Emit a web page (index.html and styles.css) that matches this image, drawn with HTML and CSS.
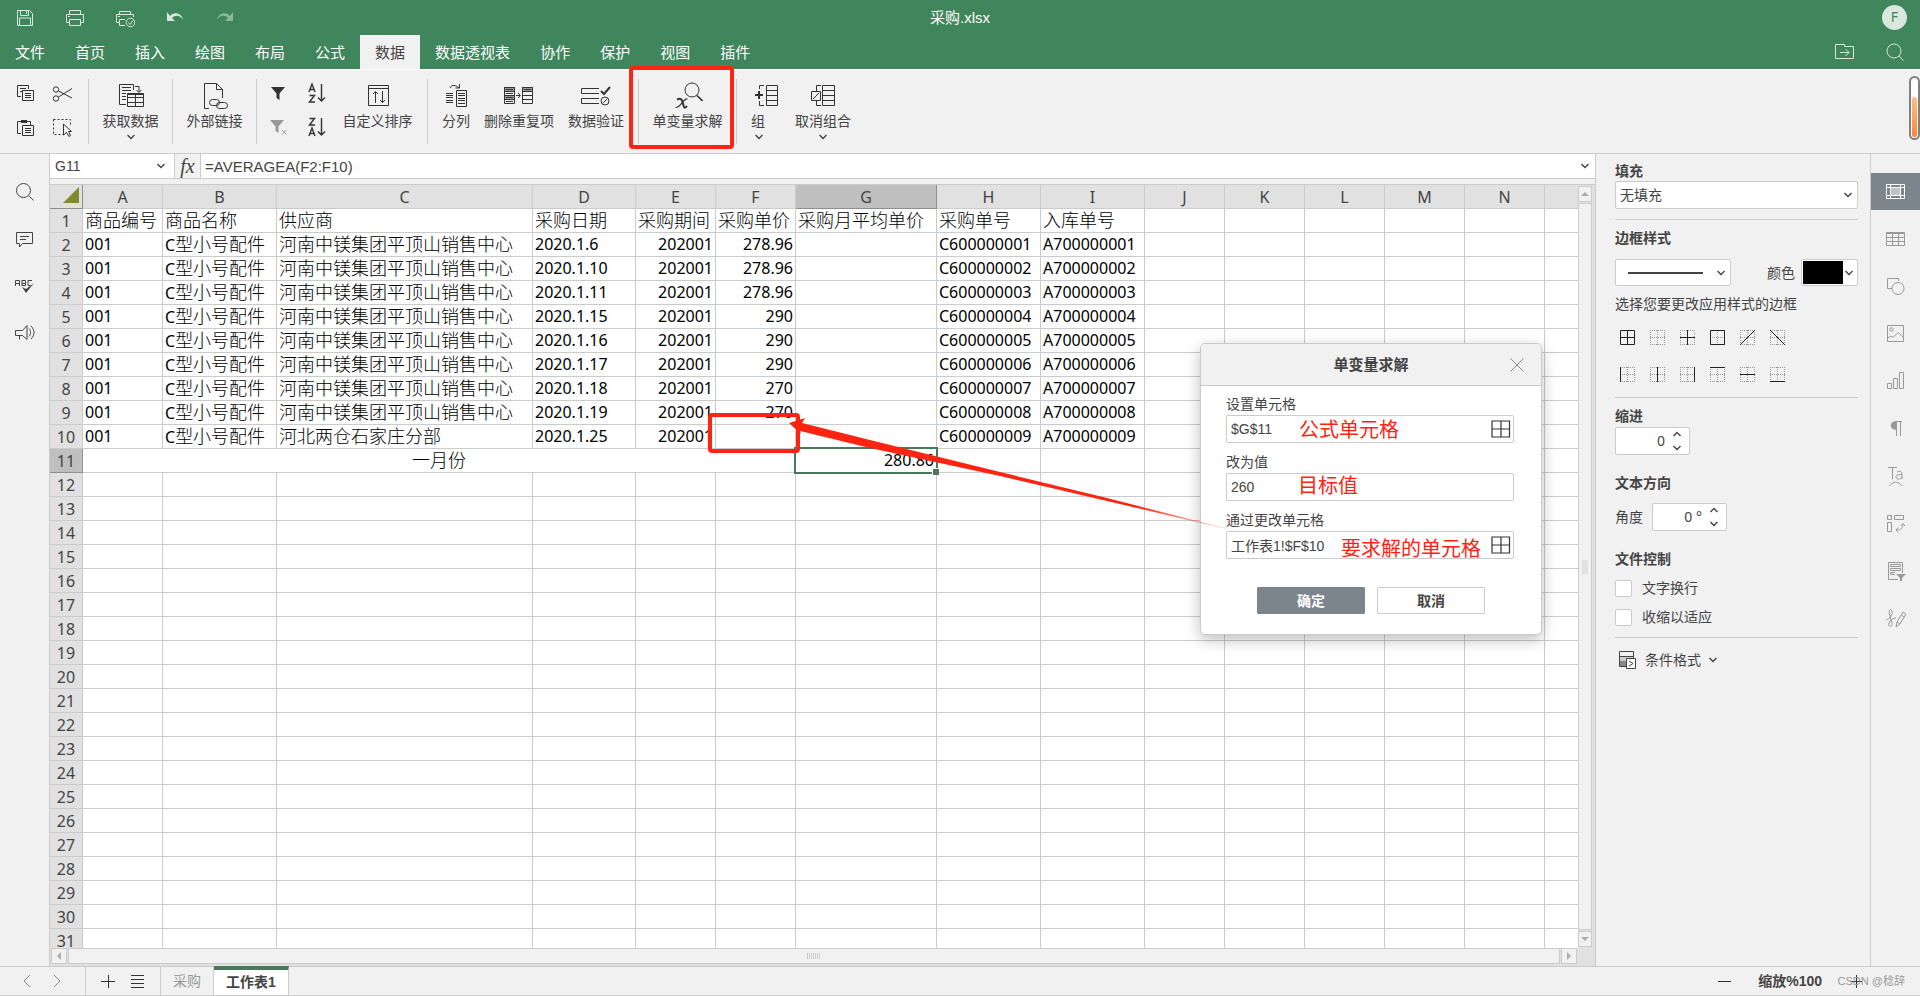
FILE: index.html
```html
<!DOCTYPE html>
<html lang="zh-CN">
<head>
<meta charset="utf-8">
<title>采购.xlsx</title>
<link rel="stylesheet" href="styles.css">
</head>
<body>
<svg class="defs" aria-hidden="true">
  <symbol id="chev" viewBox="0 0 10 8"><path d="M1.5 2 5 5.5 8.500 2" fill="none" stroke="#444" stroke-width="1.4"/></symbol>
  <symbol id="dots" viewBox="0 0 15 15"><path d="M0 .5h15M0 14.500h15M.5 0v15M14.500 0v15M0 7.500h15M7.500 0v15" fill="none" stroke="#999" stroke-dasharray="1 1"/></symbol>
  <symbol id="range" viewBox="0 0 20 18"><path d="M1 1h17.500v16H1zM1 9h17.500M10 1v16" fill="none" stroke="#333" stroke-width="1.2"/></symbol>
</svg>

<header class="top">
  <div class="titlebar">
    <div class="quick">
      <button aria-label="保存"><svg width="20" height="20" viewBox="0 0 20 20"><path d="M2.500 2.500h12l3 3v12h-15zM5.500 2.500v5h8v-5M11.500 3v3M4.500 17v-7h11v7"/></svg></button>
      <button aria-label="打印"><svg width="20" height="20" viewBox="0 0 20 20"><path d="M4.500 6V2.500h11V6M4.500 14.500h-3v-8h17v8h-3M4.500 11.500h11v6h-11zM3 8.500h2"/></svg></button>
      <button aria-label="快速打印"><svg width="20" height="20" viewBox="0 0 20 20"><path d="M4.500 6V3.500h11V6M4.500 14.500h-3v-8h17V9M10 17.500H4.500v-6H10M3 8.500h2"/><circle cx="15.500" cy="14.500" r="4.300"/><path d="m13.500 14.500 1.500 2 3-4"/></svg></button>
      <button aria-label="撤消"><svg width="20" height="20" viewBox="0 0 20 20"><path class="solid" d="M2 4v9h8L7 10c4-4 9-2 11 2-1-7-9-9-13-4z"/></svg></button>
      <button aria-label="重做" disabled><svg width="20" height="20" viewBox="0 0 20 20"><path class="solid" d="M18 4v9h-8l3-3C9 6 4 8 2 12c1-7 9-9 13-4z"/></svg></button>
    </div>
    <div class="doc-title">采购.xlsx</div>
    <div class="user"><span class="avatar">F</span></div>
  </div>
  <div class="tabbar">
    <nav class="tabs">
      <button>文件</button><button>首页</button><button>插入</button><button>绘图</button><button>布局</button><button>公式</button><button class="on">数据</button><button>数据透视表</button><button>协作</button><button>保护</button><button>视图</button><button>插件</button>
    </nav>
    <div class="quick">
      <button aria-label="打开文件位置"><svg width="20" height="18" viewBox="0 0 20 18"><path d="M.5 15.500V1.500h9v2h9v12zM5 9.500h9M10.500 6l3.500 3.500-3.500 3.500"/></svg></button>
      <button aria-label="搜索"><svg width="20" height="20" viewBox="0 0 20 20"><circle cx="9" cy="9" r="7"/><path d="m14 14 4.500 4.500"/></svg></button>
    </div>
  </div>
</header>

<div class="ribbon">
  <div class="group clip">
    <button aria-label="复制"><svg width="24" height="24" viewBox="0 0 24 24"><path d="M8 14.500H4.500v-11h11V7M7 6.500h6M7 9.500h2M9.500 8.500h11v10h-11zM12 11.500h6M12 13.500h6M12 15.500h6"/></svg></button>
    <button aria-label="剪切"><svg width="24" height="24" viewBox="0 0 24 24"><circle cx="5" cy="7.500" r="2.700"/><circle cx="5" cy="16.500" r="2.700"/><path d="m7.500 9 13.500 7M7.500 15 21 6.500"/></svg></button>
    <button aria-label="粘贴"><svg width="24" height="24" viewBox="0 0 24 24"><path d="M8 17.500H4.500v-12h13V9M9.500 9.500h11v10h-11zM12 12.500h6M12 14.500h6M12 16.500h6"/><path class="solid" d="M8 4h6v3H8z"/></svg></button>
    <button aria-label="选择"><svg width="24" height="24" viewBox="0 0 24 24"><path stroke-dasharray="2 2" d="M2.500 3.500h17V10M2.500 3.500v15H13"/><path d="M12.500 8v11l3-2.500 2.500 4 1.500-1-2-4h3z"/></svg></button>
  </div>
  <div class="group one">
    <button class="big"><svg width="30" height="28" viewBox="0 0 30 28"><path d="M10 22.500H3.500v-20h14V8M6 5.500h9M6 8.500h9M6 11.500h4M6 14.500h4M6 17.500h4M11.500 11.500h16v13h-16zM11.500 15.500h16M11.500 20.500h16M19.500 12v12M19 4.500h4V10M20.500 8l2.500 2.500L25.500 8"/><path d="M11 12.500h17"/></svg><span>获取数据</span><svg class="dd" width="10" height="8"><use href="#chev"/></svg></button>
  </div>
  <div class="group one">
    <button class="big"><svg width="30" height="28" viewBox="0 0 30 28"><path d="M9 26.500H4.500v-25h12l6 6V16M16.500 1.500v6h6"/><rect x="9.500" y="17.500" width="10" height="6" rx="3"/><rect x="16.500" y="20.500" width="11" height="6" rx="3"/></svg><span>外部链接</span></button>
  </div>
  <div class="group sort">
    <div class="pairs">
      <button aria-label="筛选"><svg width="24" height="24" viewBox="0 0 24 24"><path class="solid" d="M5 5h14l-5.500 6.500V18L10.500 16v-4.500z"/></svg></button>
      <button aria-label="升序"><svg width="24" height="24" viewBox="0 0 24 24"><path stroke-width="1.400" d="m5 10 3-8 3 8M6 7.500h4M5.500 13.500h5l-5 6.500h5.500M17.500 2v17M14 15.500l3.500 3.500 3.500-3.500"/></svg></button>
      <button aria-label="清除筛选" disabled><svg width="24" height="24" viewBox="0 0 24 24"><path class="solid" d="M4 4h14l-5.500 6.500V17L9.500 15v-4.500z"/><path d="m16 14 4.500 4.500m0-4.500L16 18.500"/></svg></button>
      <button aria-label="降序"><svg width="24" height="24" viewBox="0 0 24 24"><path stroke-width="1.400" d="M5.500 2.500h5l-5 6.500h5.500M5 20l3-8 3 8M6 17.500h4M17.500 2v17M14 15.500l3.500 3.500 3.500-3.500"/></svg></button>
    </div>
    <button class="big"><svg width="30" height="28" viewBox="0 0 30 28"><path d="M5.500 3.500h20v20h-20zM5.500 6.500h20M12.500 9.500V21M10 12l2.500-2.500L15 12M19.500 9v11.500M17 18l2.500 2.500L22 18"/></svg><span>自定义排序</span></button>
  </div>
  <div class="group wide">
    <button class="big"><svg width="30" height="28" viewBox="0 0 30 28"><path d="M5 11.500h7M5 13.500h7M5 15.500h7M5 18.500h7M5 20.500h7M15.500 8.500h10v16h-10zM17 11.500h7M17 13.500h7M17 16.500h7M17 18.500h7M17 21.500h7M9 6c2-4 6-3 9 0M18.500 2v4h-4"/></svg><span>分列</span></button>
    <button class="big"><svg width="30" height="28" viewBox="0 0 30 28"><path fill="#999" d="M.5 5.500h10v4H.5zM.5 13.500h10v4H.5zM18.500 5.500h10v4h-10z"/><path d="M.5 5.500h10v16H.5zM2 7.500h7M2 11.500h7M2 15.500h7M2 19.500h7M18.500 5.500h10v16h-10zM20 7.500h7M18.500 13.500h10M18.500 17.500h10M12 13.500h4M14 11l2.500 2.500L14 16"/></svg><span>删除重复项</span></button>
    <button class="big"><svg width="30" height="28" viewBox="0 0 30 28"><path d="M18 6.500H.5v5H18M18 16.500H.5v5H18"/><circle cx="24" cy="19" r="4"/><path d="m21.500 21.500 5-5"/><path stroke-width="2" d="m20 9 3 3 6-7"/></svg><span>数据验证</span></button>
  </div>
  <div class="group solve">
    <button class="big"><svg width="30" height="28" viewBox="0 0 30 28"><circle cx="19" cy="8" r="7"/><path stroke-width="1.600" d="m24 13.500 5.500 5.500"/><path stroke-width="2" d="M4 17.500c4-2 5 0 6 4 1 5 2 5 4 2.500"/><path stroke-width="1.200" d="M14.500 17c-4-1-7 9-12 8.500"/></svg><span>单变量求解</span></button>
  </div>
  <div class="group last">
    <button class="big left"><svg width="30" height="28" viewBox="0 0 30 28"><path d="M15.500 3.500h11v20h-11zM15.500 8.500h11M15.500 13.500h11M15.500 18.500h11M13 3.500H8.500V7M8.500 19v4.500H13"/><path stroke-width="2" d="M4 13h8M8 9v8"/></svg><span>组</span><svg class="dd" width="10" height="8"><use href="#chev"/></svg></button>
    <button class="big"><svg width="30" height="28" viewBox="0 0 30 28"><path d="M14.500 3.500h12v20h-12zM14.500 8.500h12M14.500 13.500h12M14.500 18.500h12M13 3.500H8.500V9M8.500 18v5.500H13M3.500 9.500h9v9h-9zM5 17l6-6"/></svg><span>取消组合</span><svg class="dd" width="10" height="8"><use href="#chev"/></svg></button>
  </div>
</div>

<main class="work">
  <nav class="rail left-rail">
    <button aria-label="查找"><svg width="20" height="20" viewBox="0 0 20 20"><circle cx="8.500" cy="8.500" r="7"/><path d="m13.500 13.500 5 5"/></svg></button>
    <button aria-label="批注"><svg width="20" height="20" viewBox="0 0 20 20"><path d="M1.500 3.500h16v11h-10L4.500 18v-3.500h-3zM5 7.500h9M5 10.500h6"/></svg></button>
    <button aria-label="拼写检查"><svg width="20" height="20" viewBox="0 0 20 20"><path d="M.5 10V4.500h4V10M.5 7.500h4M7 4v6M7 4.500h3.500v5H7M7 7.500h3.500M17 4.500h-4v5h2.500"/><path class="solid" d="m7 11 4 2 8-6-8 10z"/></svg></button>
    <button aria-label="反馈和支持"><svg width="20" height="20" viewBox="0 0 20 20"><path d="M.5 7.500h7l4.500-5v14l-4.500-4h-7zM4.500 12.500v4M14 5.500c2 2 2 6 0 8M16 3c4 4 4 9 0 13"/></svg></button>
  </nav>

  <section class="center">
    <div class="formula">
      <div class="namebox"><input type="text" aria-label="名称框" value="G11"><svg width="10" height="8"><use href="#chev"/></svg></div>
      <button class="fx" aria-label="插入函数">fx</button>
      <input class="expr" type="text" aria-label="编辑栏" value="=AVERAGEA(F2:F10)">
      <svg class="expand" width="10" height="8"><use href="#chev"/></svg>
    </div>
    <div class="sheet">
      <div class="viewport">
        <table class="cells"><colgroup id="cols"></colgroup><thead><tr id="heads"></tr></thead><tbody id="rows"></tbody></table>
      </div>
      <div class="vbar"><button aria-label="向上滚动"><i class="up"></i></button><div class="track"><i></i></div><button aria-label="向下滚动"><i class="down"></i></button></div>
      <div class="hbar"><button aria-label="向左滚动"><i class="lt"></i></button><div class="track"><i></i></div><button aria-label="向右滚动"><i class="rt"></i></button></div>
    </div>
  </section>

  <aside class="panel">
    <h2><label for="fill">填充</label></h2>
    <div class="select"><select id="fill"><option>无填充</option></select><svg width="10" height="8"><use href="#chev"/></svg></div>
    <hr>
    <h2>边框样式</h2>
    <div class="border-row">
      <button class="line-style" aria-label="线条样式"><i></i><svg width="10" height="8"><use href="#chev"/></svg></button>
      <span>颜色</span>
      <button class="color" aria-label="颜色"><i></i><svg width="10" height="8"><use href="#chev"/></svg></button>
    </div>
    <p>选择您要更改应用样式的边框</p>
    <div class="borders">
      <button aria-label="所有框线"><svg width="15" height="15"><path d="M.5.5h14v14H.5zM.5 7.500h14M7.500.5v14"/></svg></button>
      <button aria-label="无框线"><svg width="15" height="15"><use href="#dots"/></svg></button>
      <button aria-label="内部框线"><svg width="15" height="15"><use href="#dots"/><path d="M0 7.500h15M7.500 0v15"/></svg></button>
      <button aria-label="外部框线"><svg width="15" height="15"><use href="#dots"/><path d="M.5.5h14v14H.5z"/></svg></button>
      <button aria-label="斜上框线"><svg width="15" height="15"><use href="#dots"/><path d="M0 15 15 0"/></svg></button>
      <button aria-label="斜下框线"><svg width="15" height="15"><use href="#dots"/><path d="m0 0 15 15"/></svg></button>
      <button aria-label="左框线"><svg width="15" height="15"><use href="#dots"/><path d="M.5 0v15"/></svg></button>
      <button aria-label="内部竖线"><svg width="15" height="15"><use href="#dots"/><path d="M7.500 0v15"/></svg></button>
      <button aria-label="右框线"><svg width="15" height="15"><use href="#dots"/><path d="M14.500 0v15"/></svg></button>
      <button aria-label="上框线"><svg width="15" height="15"><use href="#dots"/><path d="M0 .5h15"/></svg></button>
      <button aria-label="内部横线"><svg width="15" height="15"><use href="#dots"/><path d="M0 7.500h15"/></svg></button>
      <button aria-label="下框线"><svg width="15" height="15"><use href="#dots"/><path d="M0 14.500h15"/></svg></button>
    </div>
    <hr>
    <h2><label for="indent">缩进</label></h2>
    <div class="spin"><input id="indent" type="text" value="0"><span><button aria-label="增加缩进"><svg width="10" height="8" class="flip"><use href="#chev"/></svg></button><button aria-label="减少缩进"><svg width="10" height="8"><use href="#chev"/></svg></button></span></div>
    <h2 class="spaced">文本方向</h2>
    <div class="angle"><label for="angle">角度</label><div class="spin"><input id="angle" type="text" value="0 °"><span><button aria-label="增加角度"><svg width="10" height="8" class="flip"><use href="#chev"/></svg></button><button aria-label="减少角度"><svg width="10" height="8"><use href="#chev"/></svg></button></span></div></div>
    <h2 class="spaced">文件控制</h2>
    <label class="check"><input type="checkbox">文字换行</label>
    <label class="check"><input type="checkbox">收缩以适应</label>
    <hr>
    <button class="cond"><svg width="20" height="20" viewBox="0 0 20 20"><path fill="#ccc" stroke="none" d="M2 6h14v5H2z"/><path fill="#888" stroke="none" d="M2 11h7v5H2z"/><path d="M9 16.500H1.500v-15h14V8M1.500 6.500h14"/><path fill="#fff" d="M8.500 8.500h9v10h-9z"/><path d="m11 11 4 2.500-4 2.500"/></svg>条件格式<svg width="10" height="8"><use href="#chev"/></svg></button>
  </aside>

  <nav class="rail right-rail">
    <button class="on" aria-label="单元格设置"><svg width="20" height="20" viewBox="0 0 20 20"><path d="M.5 2.500h18v14H.5zM.5 5.500h18M.5 13.500h18M4.500 2.500v14M14.500 2.500v14"/><path class="solid" opacity=".5" d="M5 6h9v7H5z"/></svg></button>
    <button aria-label="表格设置"><svg width="20" height="20" viewBox="0 0 20 20"><path d="M.5 3.500h18v13H.5zM.5 4.500h18M.5 8.500h18M.5 12.500h18M6.500 4v12M12.500 4v12"/></svg></button>
    <button aria-label="形状设置"><svg width="20" height="20" viewBox="0 0 20 20"><path d="M6 12.500H1.500v-10h11V5"/><circle cx="12" cy="12.500" r="6"/></svg></button>
    <button aria-label="图像设置"><svg width="20" height="20" viewBox="0 0 20 20"><path d="M1.500 1.500h16v16h-16zM2 14l3-2 2 1.500 5-5 5.500 5"/><circle cx="5.500" cy="5.500" r="1.700"/></svg></button>
    <button aria-label="图表设置"><svg width="20" height="20" viewBox="0 0 20 20"><path d="M1.500 12.500h4v5h-4zM7.500 7.500h4v10h-4zM13.500 1.500h4v16h-4z"/></svg></button>
    <button aria-label="段落设置"><svg width="20" height="20" viewBox="0 0 20 20"><path class="solid" d="M10 2v9c-7 0-7-9 0-9z"/><path d="M9 2.500h7M10.500 3v14M14.500 3v14"/></svg></button>
    <button aria-label="艺术字设置"><svg width="20" height="20" viewBox="0 0 20 20"><path d="M2 1.500h9M6.500 2v11M11 6c4-2 5 0 5 2v5M16 8.500c-3 0-6 0-6 2.500s5 3 6 0M3 20c4-5 9-5 13 0"/></svg></button>
    <button aria-label="数据透视表设置"><svg width="20" height="20" viewBox="0 0 20 20"><path d="M1.500 1.500h4v4h-4zM8.500 1.500h9v4h-9zM1.500 8.500h4v9h-4zM11 16c4 0 6-2 6-6M14.500 12 17 9.500l2 2.500M12.500 13.500 10 16l2.500 2.500"/></svg></button>
    <button aria-label="切片器设置"><svg width="20" height="20" viewBox="0 0 20 20"><path d="M12 18.500H2.500v-17h14V12M4.500 3.500h10v2h-10zM4.500 7.500h10v2h-10zM9 13.500H4.500v-2H9"/><path class="solid" d="M10 13h10l-4 4v5l-2-1v-4z"/></svg></button>
    <button aria-label="签名设置"><svg width="20" height="20" viewBox="0 0 20 20"><path d="M0 12c4-1 7-6 6-9-2-4-4 1-2 5l2 7c1 5-5 4-3 0 1-3 4-5 7-5M10 19l1-5 6-10 3 2-6 10zM15.500 7l2.500 2M11 14l3 2"/></svg></button>
  </nav>
</main>

<footer class="status">
  <div class="nav"><button aria-label="上一张"><svg width="20" height="20" viewBox="0 0 20 20"><path d="m13 4-6 6 6 6"/></svg></button><button aria-label="下一张"><svg width="20" height="20" viewBox="0 0 20 20"><path d="m7 4 6 6-6 6"/></svg></button></div>
  <div class="add"><button aria-label="添加工作表"><svg width="20" height="20" viewBox="0 0 20 20"><path d="M3 10.500h14M10.500 4v13"/></svg></button><button aria-label="工作表列表"><svg width="20" height="20" viewBox="0 0 20 20"><path d="M3 4.500h13M3 8.500h13M3 12.500h13M3 16.500h13"/></svg></button></div>
  <button class="tab">采购</button>
  <button class="tab on">工作表1</button>
  <div class="zoom"><button aria-label="缩小"><svg width="20" height="20" viewBox="0 0 20 20"><path d="M4 10.500h13"/></svg></button><span class="pct">缩放%100</span><button aria-label="放大"><svg width="20" height="20" viewBox="0 0 20 20"><path d="M4 10.500h12M10.500 4v13"/></svg></button></div>
</footer>

<form class="dialog" role="dialog" aria-labelledby="dlg-title">
  <div class="dlg-head"><strong id="dlg-title">单变量求解</strong><button type="button" aria-label="关闭"><svg width="14" height="14" viewBox="0 0 14 14"><path d="m.5.5 13 13m0-13L.5 13.500"/></svg></button></div>
  <div class="dlg-body">
    <label for="set-cell">设置单元格</label>
    <div class="field"><input id="set-cell" type="text" value="$G$11"><button type="button" aria-label="选择数据"><svg width="20" height="18"><use href="#range"/></svg></button></div>
    <label for="to-value">改为值</label>
    <div class="field"><input id="to-value" type="text" value="260"></div>
    <label for="by-cell">通过更改单元格</label>
    <div class="field"><input id="by-cell" type="text" value="工作表1!$F$10"><button type="button" aria-label="选择数据"><svg width="20" height="18"><use href="#range"/></svg></button></div>
    <div class="actions"><button type="button" class="ok">确定</button><button type="button">取消</button></div>
  </div>
</form>

<div class="notes">
  <div class="box box-tool"></div>
  <div class="box box-cell"></div>
  <svg class="arrow" width="460" height="120" viewBox="0 0 460 120"><defs><linearGradient id="fade" x1="0" x2="1"><stop offset=".75" stop-color="#ff2312"/><stop offset="1" stop-color="#ff2312" stop-opacity="0"/></linearGradient></defs><path fill="url(#fade)" d="M-1 8 15 3 12 8 80 25 210 57 317 83 458 119 317 86 210 61 80 33 10 16 11 19z"/></svg>
  <span class="note n1">公式单元格</span>
  <span class="note n2">目标值</span>
  <span class="note n3">要求解的单元格</span>
  <span class="mark">CSDN @稔辞</span>
  <div class="meter"><i></i></div>
</div>
<script src="sheet.js"></script>
</body>
</html>
```
FILE: styles.css
```css
* { box-sizing: border-box; }
body {
  margin: 0; height: 100vh; display: flex; flex-direction: column; position: relative; overflow: hidden;
  font: 14px/20px "Liberation Sans", "Noto Sans CJK SC", sans-serif; color: #444; background: #f1f1f1;
}
button, input, select { font: inherit; color: inherit; margin: 0; padding: 0; border: 0; background: none; border-radius: 0; outline: 0; min-width: 0; }
button { display: flex; align-items: center; justify-content: center; white-space: nowrap; }
svg { fill: none; stroke: currentColor; flex: none; display: block; }
svg .solid { fill: currentColor; stroke: none; }
.defs { position: absolute; width: 0; height: 0; }

.top { background: #40865c; color: #fff; font-size: 15px; border-bottom: 1px solid #fff; }
.titlebar { display: grid; grid-template-columns: 1fr auto 1fr; height: 35px; align-items: center; }
.quick { display: flex; color: #d9e7de; }
.quick button { width: 50px; height: 34px; }
.quick button:disabled { opacity: .5; }
.user { display: flex; justify-content: flex-end; padding-right: 13px; }
.avatar { width: 25px; height: 25px; border-radius: 50%; background: #d9e7de; color: #40865c; font: 14px/24px "Noto Sans", sans-serif; text-align: center; }
.tabbar { display: flex; justify-content: space-between; height: 34px; }
.tabs { display: flex; }
.tabs button { padding: 2px 15px 0; }
.tabs .on { background: #f1f1f1; color: #444; }

.ribbon { display: flex; height: 84px; padding: 9px 0; border-bottom: 1px solid #cbcbcb; color: #333; }
.group { display: flex; border-right: 1px solid #cbcbcb; }
.clip, .pairs { display: grid; grid-template-columns: 38px 38px; grid-template-rows: 30px 30px; row-gap: 4px; align-content: start; }
.clip { padding: 0 6px; width: 89px; }
.one { width: 84px; justify-content: center; }
.one + .sort { width: 171px; padding-left: 2px; }
.sort .big { width: 85px; }
.pairs button:disabled { color: #999; }
.wide { gap: 14px; padding: 0 14px; }
.solve { width: 98px; justify-content: center; }
.last { border: 0; padding-left: 14px; gap: 14px; }
.big { flex-direction: column; justify-content: flex-start; padding-top: 3px; }
.big span { line-height: 20px; margin-top: 1px; color: #444; }
.wide .big:first-child { width: 28px; }
.dd { margin-top: 2px; }
.left { align-items: flex-start; }
.left .dd { margin-left: 3px; }

.work { flex: 1; min-height: 0; display: flex; }
.rail { display: flex; flex-direction: column; flex: none; width: 50px; padding-top: 19px; }
.rail button { height: 37px; width: 100%; }
.left-rail { border-right: 1px solid #cbcbcb; gap: 10px; color: #444; }
.right-rail { width: 49px; height: 483px; justify-content: space-between; color: #999; }
.right-rail .on { background: #7d858c; color: #fff; }

.center { flex: 1; min-width: 0; display: flex; flex-direction: column; }
.formula { display: flex; align-items: center; height: 25px; background: #fff; border-bottom: 1px solid #cbcbcb; font-size: 15px; }
.namebox { display: flex; align-items: center; width: 125px; height: 24px; border-right: 1px solid #cbcbcb; padding: 0 8px 0 5px; font-size: 14px; }
.namebox input { flex: 1; height: 24px; }
.fx { width: 26px; height: 24px; background: #f1f1f1; border-right: 1px solid #cbcbcb; font: italic 20px/20px "Liberation Serif", serif; }
.expr { flex: 1; height: 24px; padding-left: 4px; }
.expand { margin-right: 5px; }
.sheet { flex: 1; min-height: 0; margin-top: 5px; border-top: 1px solid #cbcbcb; background: #e1e1e1; display: grid; grid-template-columns: minmax(0, 1fr) 17px; grid-template-rows: minmax(0, 1fr) 18px; }
.viewport { overflow: hidden; background: #fff; }
.cells { border-collapse: separate; border-spacing: 0; table-layout: fixed; width: 1575px; font: 16px/23px "Noto Sans", "Noto Sans CJK SC", sans-serif; color: #000; }
.cells th, .cells td { height: 24px; padding: 0 2px; border: 0 solid #cbcbcb; border-width: 0 1px 1px 0; white-space: nowrap; text-align: left; }
.cells th { background: #e1e1e1; color: #444; font-weight: 400; text-align: center; line-height: 21px; padding: 2px 0 0; }
.cells th.sel { background: #bfbfbf; border-color: #8f8f8f; }
.cells .corner { border-color: #8f8f8f; padding: 0 3px 3px; }
.corner i { display: block; margin-left: auto; width: 16px; height: 16px; background: #808a2e; clip-path: polygon(100% 0, 100% 100%, 0 100%); }
.cells td.zh { font-size: 18px; font-weight: 300; }
.cells .zh b { font-weight: 400; font-size: 16px; line-height: 16px; }
.cells td.num { text-align: right; }
.cells td.mid { text-align: center; }
.cells td.active { position: relative; }
.active::before { content: ""; position: absolute; inset: -2px; border: 2px solid #49795d; }
.active::after { content: ""; position: absolute; right: -3px; bottom: -3px; width: 6px; height: 6px; background: #49795d; border: solid #fff; border-width: 1px 0 0 1px; }

.vbar { display: flex; flex-direction: column; gap: 1px; padding: 1px 3px 1px 0; grid-row: 1; grid-column: 2; }
.hbar { display: flex; gap: 1px; padding: 0 1px 2px; grid-row: 2; grid-column: 1; }
.vbar button, .hbar button { width: 16px; height: 16px; background: #f1f1f1; border: 1px solid #cbcbcb; flex: none; }
.vbar button { width: 14px; }
.track { flex: 1; background: #f1f1f1; border: 1px solid #cbcbcb; display: flex; align-items: center; justify-content: center; }
.hbar .track i { width: 14px; height: 6px; background: repeating-linear-gradient(90deg, #cbcbcb 0 1px, #f1f1f1 1px 2px); }
.vbar .track i { width: 6px; height: 14px; background: #e1e1e1; }
.up, .down, .lt, .rt { border: 4px solid transparent; }
.up { border-top: 0; border-bottom-color: #adadad; }
.down { border-bottom: 0; border-top-color: #adadad; }
.lt { border-left: 0; border-right-color: #adadad; }
.rt { border-right: 0; border-left-color: #adadad; }

.panel { width: 276px; flex: none; border: solid #cbcbcb; border-width: 0 1px; padding: 7px 12px 0 19px; }
.panel h2 { font-size: 14px; line-height: 20px; margin: 0; font-weight: 700; }
.panel h2.spaced { margin-top: 18px; }
.panel p { margin: 8px 0 16px; }
.panel hr { border: 0; border-top: 1px solid #cbcbcb; margin: 10px 0 8px; }
.select { position: relative; }
.select select { appearance: none; display: block; width: 100%; height: 28px; background: #fff; border: 1px solid #cbcbcb; border-radius: 2px; padding: 0 4px; }
.select svg { position: absolute; right: 5px; top: 10px; pointer-events: none; }
.border-row { display: flex; align-items: center; margin-top: 11px; }
.line-style, .color, .spin { height: 27px; background: #fff; border: 1px solid #cbcbcb; border-radius: 2px; }
.line-style { width: 116px; justify-content: space-between; padding: 0 4px 0 12px; }
.line-style i { width: 75px; height: 2px; background: #444; }
.border-row span { margin: 0 6px 0 auto; }
.color { width: 57px; justify-content: space-between; padding: 0 3px 0 1px; }
.color i { width: 40px; height: 23px; background: #000; }
.borders { display: grid; grid-template-columns: repeat(6, 15px); gap: 22px 15px; padding-left: 5px; margin-bottom: 15px; color: #222; }
.spin { display: flex; width: 75px; height: 28px; margin-top: 1px; font-family: "Noto Sans", sans-serif; }
.spin input { width: 49px; text-align: right; }
.spin span { display: flex; flex-direction: column; justify-content: space-between; width: 24px; padding: 2px 0; }
.flip { transform: scaleY(-1); }
.angle { display: flex; align-items: center; gap: 9px; margin-top: 9px; }
.check { display: flex; align-items: center; gap: 10px; margin-top: 9px; }
.check input { appearance: none; width: 17px; height: 17px; border: 1px solid #cbcbcb; border-radius: 2px; background: #fff; }
.cond { gap: 7px; margin-top: 12px; padding-left: 3px; }

.status { display: flex; flex: none; height: 30px; border-top: 1px solid #cbcbcb; border-bottom: 1px solid #cbcbcb; }
.nav, .add { display: flex; justify-content: center; gap: 10px; border-right: 1px solid #cbcbcb; }
.nav { width: 86px; color: #888; padding-right: 2px; }
.add { width: 75px; color: #333; }
.status .tab { padding: 0 12px; color: #999; border-right: 1px solid #cbcbcb; }
.status .tab.on { background: #fff; color: #444; font-weight: 700; border-top: 4px solid #49795d; margin-top: -1px; padding-bottom: 2px; }
.zoom { display: flex; align-items: center; margin-left: auto; padding-right: 54px; color: #333; }
.pct { font-weight: 700; color: #444; margin: 0 24px; }

.dialog { position: absolute; left: 1200px; top: 343px; width: 342px; background: #fff; border: 1px solid #cbcbcb; border-radius: 5px; box-shadow: 0 5px 15px rgba(0, 0, 0, .25); }
.dlg-head { display: grid; grid-template-columns: 38px 1fr 38px; height: 42px; align-items: center; text-align: center; background: #f1f1f1; border-bottom: 1px solid #cbcbcb; border-radius: 4px 4px 0 0; font-size: 15px; }
.dlg-head strong { grid-column: 2; }
.dlg-head button { color: #888; width: 28px; }
.dlg-body { padding: 8px 27px 20px 25px; }
.dlg-body label { display: block; line-height: 20px; margin-bottom: 1px; }
.field { display: flex; align-items: center; height: 28px; margin-bottom: 9px; border: 1px solid #cbcbcb; border-radius: 2px; padding: 0 2px 0 4px; }
.field input { flex: 1; height: 24px; }
.actions { display: flex; justify-content: center; gap: 12px; padding: 19px 0 0 2px; }
.actions button { width: 108px; height: 27px; border: 1px solid #cbcbcb; border-radius: 1px; font-weight: 700; }
.actions .ok { background: #7d858c; border-color: #7d858c; color: #fff; }

.notes { position: absolute; inset: 0; pointer-events: none; }
.notes > * { position: absolute; }
.box { border: 4px solid #ff2312; border-radius: 4px; }
.box-tool { left: 629px; top: 66px; width: 105px; height: 83px; }
.box-cell { left: 708px; top: 413px; width: 92px; height: 40px; }
.arrow { left: 790px; top: 415px; stroke: none; overflow: visible; }
.note { font-size: 20px; line-height: 28px; color: #ff2312; }
.n1 { left: 1299px; top: 416px; }
.n2 { left: 1298px; top: 472px; }
.n3 { left: 1341px; top: 535px; }
.mark { right: 15px; bottom: 5px; font-size: 11px; color: #999; }
.meter { right: 0; top: 76px; width: 11px; height: 64px; border: 2px solid #808080; border-radius: 6px; background: #fff; padding: 19px 1px 1px; }
.meter i { display: block; height: 100%; border-radius: 2px; background: linear-gradient(#ffc183, #ff8534); }
```
FILE: sheet.js
```js
const widths = [33, 80, 114, 256, 103, 80, 80, 141, 104, 104, 80, 80, 80, 80, 80, 80];
const letters = [...'ABCDEFGHIJKLMN', ''];
const titles = ['商品编号', '商品名称', '供应商', '采购日期', '采购期间', '采购单价', '采购月平均单价', '采购单号', '入库单号'];
const orders = [
  ['2020.1.6', '278.96'], ['2020.1.10', '278.96'], ['2020.1.11', '278.96'],
  ['2020.1.15', '290'], ['2020.1.16', '290'], ['2020.1.17', '290'],
  ['2020.1.18', '270'], ['2020.1.19', '270'], ['2020.1.25', '']
];

const td = (text = '', cls = '', span = 1) => `<td class="${cls}" colspan="${span}">${text}</td>`;
const blanks = n => td().repeat(n);

function cellsOf(row) {
  if (row === 1) return titles.map(t => td(t, 'zh')).join('') + blanks(6);
  if (row <= 10) {
    const [date, price] = orders[row - 2];
    const supplier = row === 10 ? '河北两仓石家庄分部' : '河南中镁集团平顶山销售中心';
    return td('001') + td('<b>C</b>型小号配件', 'zh') + td(supplier, 'zh') + td(date) +
      td('202001', 'num') + td(price, 'num') + td() +
      td('C60000000' + (row - 1)) + td('A70000000' + (row - 1)) + blanks(6);
  }
  if (row === 11) return td('一月份', 'zh mid', 6) + td('280.86', 'num active') + blanks(8);
  return blanks(15);
}

document.getElementById('cols').innerHTML = widths.map(w => `<col style="width:${w}px">`).join('');
document.getElementById('heads').innerHTML = '<th class="corner"><i></i></th>' +
  letters.map(l => `<th class="${l === 'G' ? 'sel' : ''}">${l}</th>`).join('');
let html = '';
for (let r = 1; r <= 31; r++) html += `<tr><th class="${r === 11 ? 'sel' : ''}">${r}</th>${cellsOf(r)}</tr>`;
document.getElementById('rows').innerHTML = html;
```
